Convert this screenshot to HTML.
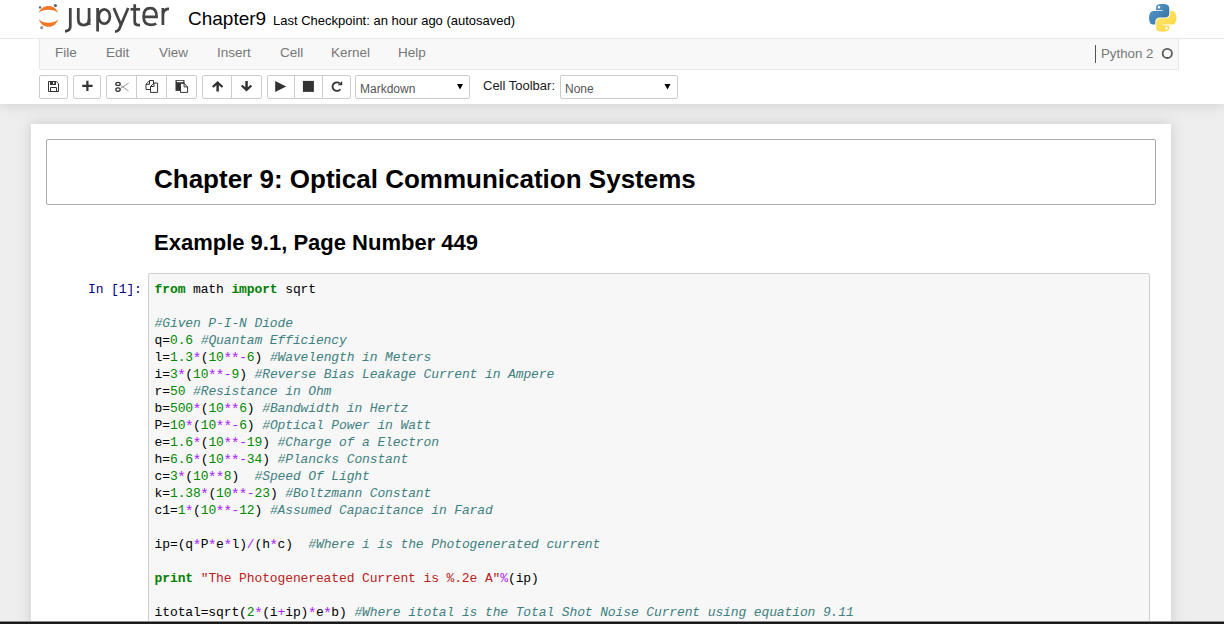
<!DOCTYPE html>
<html><head><meta charset="utf-8">
<style>
*{box-sizing:border-box;margin:0;padding:0}
html,body{width:1224px;height:624px;overflow:hidden;background:#eee;font-family:"Liberation Sans",sans-serif;font-size:13px;color:#000;position:relative}
#header{position:absolute;left:0;top:0;width:1224px;height:104px;background:#fff;box-shadow:0 0 12px 1px rgba(87,87,87,0.2);z-index:2}
#hdrline{position:absolute;left:0;top:38px;width:1224px;height:1px;background:#e7e7e7}
#logo{position:absolute;left:38px;top:2px}
#nbname{position:absolute;left:188px;top:8px;font-size:19px;line-height:22px}
#ckpt{position:absolute;left:273px;top:13px;font-size:13px;line-height:16px}
#pylogo{position:absolute;left:1149px;top:4px}
#menubar{position:absolute;left:39px;top:38px;width:1140px;height:32px;background:#f8f8f8;border:1px solid #e7e7e7;border-top-color:#e7e7e7;border-radius:0 0 1px 1px}
.mi{position:absolute;top:6px;font-size:13.5px;line-height:16px;color:#777}
#kdiv{position:absolute;left:1055px;top:6px;width:1px;height:18px;background:#555}
#kcirc{position:absolute;left:1122px;top:10px;width:11px;height:11px;border:2px solid #666;border-radius:50%}
.btn{position:absolute;top:75px;height:24px;border:1px solid #ccc;background:#fff;border-radius:2px}
.btn svg{position:absolute;left:50%;top:50%;transform:translate(-50%,-50%)}
.sel{position:absolute;top:75px;height:24px;border:1px solid #ccc;border-radius:2px;background:#fff;font-size:12px;color:#555;padding:5px 4px;line-height:16px}
.sel .ar{position:absolute;right:7px;top:4px;font-size:10px;color:#000}
#ctlabel{position:absolute;left:483px;top:78.2px;font-size:13px;line-height:16px;color:#1a1a1a}
#container{position:absolute;left:31px;top:124px;width:1140px;height:520px;background:#fff;box-shadow:0 0 12px 1px rgba(87,87,87,0.2)}
#cell1{position:absolute;left:46px;top:139px;width:1110px;height:66px;border:1px solid #ababab;border-radius:2px}
h1{position:absolute;left:154px;top:164px;font-size:26px;line-height:30px;font-weight:bold}
h2{position:absolute;left:154px;top:230px;font-size:22px;line-height:26px;font-weight:bold}
#prompt{position:absolute;left:88px;top:281px;font-family:"Liberation Mono",monospace;font-size:13px;letter-spacing:-0.12px;line-height:17px;color:#000080}
#input{position:absolute;left:148px;top:273px;width:1002px;height:400px;background:#f7f7f7;border:1px solid #cfcfcf;border-radius:2px}
#code{position:absolute;left:154.6px;top:281px;font-family:"Liberation Mono",monospace;font-size:13px;letter-spacing:-0.12px;line-height:17px;white-space:pre;color:#000}
.k{color:#008000;font-weight:bold}
.n{color:#008800}
.o{color:#aa22ff}
.st{font-style:normal;font-size:15px;letter-spacing:-1.32px;position:relative;left:-0.6px;top:1.8px}
.c{color:#408080;font-style:italic}
.s{color:#ba2121}
#bottombar{position:absolute;left:0;top:621px;width:1224px;height:3px;background:linear-gradient(#8c8c8c 0,#8c8c8c 1px,#141414 1px,#141414 2px,#1e1e1e 2px);z-index:5}
</style></head><body>
<div id="container"></div>
<div id="cell1"></div>
<h1>Chapter 9: Optical Communication Systems</h1>
<h2>Example 9.1, Page Number 449</h2>
<div id="prompt">In [1]:</div>
<div id="input"></div>
<div id="code"><span class="k">from</span> math <span class="k">import</span> sqrt

<span class="c">#Given P-I-N Diode</span>
q=<span class="n">0.6</span> <span class="c">#Quantam Efficiency</span>
l=<span class="n">1.3</span><span class="o"><i class="st">*</i></span>(<span class="n">10</span><span class="o"><i class="st">*</i><i class="st">*</i>-</span><span class="n">6</span>) <span class="c">#Wavelength in Meters</span>
i=<span class="n">3</span><span class="o"><i class="st">*</i></span>(<span class="n">10</span><span class="o"><i class="st">*</i><i class="st">*</i>-</span><span class="n">9</span>) <span class="c">#Reverse Bias Leakage Current in Ampere</span>
r=<span class="n">50</span> <span class="c">#Resistance in Ohm</span>
b=<span class="n">500</span><span class="o"><i class="st">*</i></span>(<span class="n">10</span><span class="o"><i class="st">*</i><i class="st">*</i></span><span class="n">6</span>) <span class="c">#Bandwidth in Hertz</span>
P=<span class="n">10</span><span class="o"><i class="st">*</i></span>(<span class="n">10</span><span class="o"><i class="st">*</i><i class="st">*</i>-</span><span class="n">6</span>) <span class="c">#Optical Power in Watt</span>
e=<span class="n">1.6</span><span class="o"><i class="st">*</i></span>(<span class="n">10</span><span class="o"><i class="st">*</i><i class="st">*</i>-</span><span class="n">19</span>) <span class="c">#Charge of a Electron</span>
h=<span class="n">6.6</span><span class="o"><i class="st">*</i></span>(<span class="n">10</span><span class="o"><i class="st">*</i><i class="st">*</i>-</span><span class="n">34</span>) <span class="c">#Plancks Constant</span>
c=<span class="n">3</span><span class="o"><i class="st">*</i></span>(<span class="n">10</span><span class="o"><i class="st">*</i><i class="st">*</i></span><span class="n">8</span>)  <span class="c">#Speed Of Light</span>
k=<span class="n">1.38</span><span class="o"><i class="st">*</i></span>(<span class="n">10</span><span class="o"><i class="st">*</i><i class="st">*</i>-</span><span class="n">23</span>) <span class="c">#Boltzmann Constant</span>
c1=<span class="n">1</span><span class="o"><i class="st">*</i></span>(<span class="n">10</span><span class="o"><i class="st">*</i><i class="st">*</i>-</span><span class="n">12</span>) <span class="c">#Assumed Capacitance in Farad</span>

ip=(q<span class="o"><i class="st">*</i></span>P<span class="o"><i class="st">*</i></span>e<span class="o"><i class="st">*</i></span>l)<span class="o">/</span>(h<span class="o"><i class="st">*</i></span>c)  <span class="c">#Where i is the Photogenerated current</span>

<span class="k">print</span> <span class="s">"The Photogenereated Current is %.2e A"</span><span class="o">%</span>(ip)

itotal=sqrt(<span class="n">2</span><span class="o"><i class="st">*</i></span>(i<span class="o">+</span>ip)<span class="o"><i class="st">*</i></span>e<span class="o"><i class="st">*</i></span>b) <span class="c">#Where itotal is the Total Shot Noise Current using equation 9.11</span></div>

<div id="header">
  <div id="hdrline"></div>
  <div id="nbname">Chapter9</div>
  <div id="ckpt">Last Checkpoint: an hour ago (autosaved)</div>
  <div id="menubar">
    <div class="mi" style="left:15px">File</div>
    <div class="mi" style="left:66px">Edit</div>
    <div class="mi" style="left:119px">View</div>
    <div class="mi" style="left:177px">Insert</div>
    <div class="mi" style="left:240px">Cell</div>
    <div class="mi" style="left:291px">Kernel</div>
    <div class="mi" style="left:358px">Help</div>
    <div id="kdiv"></div>
    <div class="mi" style="left:1061px;top:7px;font-size:13.3px">Python 2</div>
  </div>
  <div class="btn" style="left:39px;width:29px"></div>
  <div class="btn" style="left:73px;width:28px"></div>
  <div class="btn" style="left:106px;width:31px;border-radius:2px 0 0 2px"></div>
  <div class="btn" style="left:136px;width:31px;border-radius:0"></div>
  <div class="btn" style="left:166px;width:31px;border-radius:0 2px 2px 0"></div>
  <div class="btn" style="left:202px;width:30px;border-radius:2px 0 0 2px"></div>
  <div class="btn" style="left:231px;width:31px;border-radius:0 2px 2px 0"></div>
  <div class="btn" style="left:267px;width:28px;border-radius:2px 0 0 2px"></div>
  <div class="btn" style="left:294px;width:29px;border-radius:0"></div>
  <div class="btn" style="left:322px;width:29px;border-radius:0 2px 2px 0"></div>
  <div class="sel" style="left:355px;width:115px">Markdown</div>
  <div id="ctlabel">Cell Toolbar:</div>
  <div class="sel" style="left:560px;width:118px">None</div>
  <svg id="ov" width="1224" height="104" viewBox="0 0 1224 104" style="position:absolute;left:0;top:0">
    <!-- jupyter logo -->
    <path d="M38.9,12.8 C41.5,3.6 55.5,3.6 58.1,12.8 C54.5,8.67 42.5,8.67 38.9,12.8 Z" fill="#f37726"/>
    <path d="M38.9,19.2 C41.5,29.2 55.5,29.2 58.1,19.2 C54.5,24.0 42.5,24.0 38.9,19.2 Z" fill="#f37726"/>
    <circle cx="40.05" cy="7.4" r="1.2" fill="#616262"/>
    <circle cx="55.4" cy="5.5" r="1.6" fill="#616262"/>
    <circle cx="41.7" cy="27.7" r="1.6" fill="#989798"/>
    <g fill="none" stroke="#444" stroke-width="2.75">
      <path d="M70.3,8 V26.5 Q70.3,30.8 65,31.3"/>
      <path d="M78.3,8 V19.5 Q78.3,25 83.7,25 Q89.1,25 89.1,19"/>
      <path d="M89.1,8 V25"/>
      <path d="M97.6,8 V31.5"/>
      <ellipse cx="104.3" cy="16.5" rx="5.6" ry="7.2"/>
      <path d="M113.8,8 L121,25"/>
      <path d="M128.2,8 L119,29.5 Q117.8,31.5 115,31.5"/>
      <path d="M134.7,4.2 V21.5 Q134.7,25 138,25 H140"/>
      <path d="M130.5,9.3 H140"/>
      <path d="M144,16.8 H156.6 Q156.6,8.2 150.3,8.2 Q143.6,8.2 143.6,16.6 Q143.6,24.9 150.8,24.9 Q154,24.9 156.3,23.6"/>
      <path d="M162.9,8 V25"/>
      <path d="M162.9,13.5 Q164.5,8.7 169,8.9"/>
    </g>
    <!-- python logo -->
    <defs>
      <linearGradient id="pyb" x1="0" y1="0" x2="1" y2="1"><stop offset="0" stop-color="#5a9fd4"/><stop offset="1" stop-color="#306998"/></linearGradient>
      <linearGradient id="pyy" x1="0" y1="0" x2="1" y2="1"><stop offset="0" stop-color="#ffe873"/><stop offset="1" stop-color="#ffd43b"/></linearGradient>
    </defs>
    <g transform="translate(1149,4) scale(0.247)">
      <path fill="url(#pyb)" d="M54.9,0.0 C50.3,0.0 45.9,0.4 42.1,1.1 C30.8,3.1 28.7,7.3 28.7,15.0 V25.2 H55.4 V28.6 H18.7 C10.9,28.6 4.1,33.3 1.9,42.2 C-0.6,52.5 -0.7,58.9 1.9,69.6 C3.8,77.6 8.4,83.2 16.1,83.2 H25.4 V70.9 C25.4,62.0 33.1,54.2 42.1,54.2 H68.7 C76.1,54.2 82.0,48.1 82.0,40.7 V15.0 C82.0,7.7 75.9,2.3 68.7,1.1 C64.0,0.3 59.2,0.0 54.9,0.0 Z M40.4,8.3 C43.2,8.3 45.4,10.6 45.4,13.3 C45.4,16.1 43.2,18.3 40.4,18.3 C37.7,18.3 35.5,16.1 35.5,13.3 C35.5,10.6 37.7,8.3 40.4,8.3 Z"/>
      <path fill="url(#pyy)" d="M85.6,28.6 V40.6 C85.6,49.8 77.8,57.6 68.7,57.6 H42.1 C34.8,57.6 28.7,63.9 28.7,71.2 V96.8 C28.7,104.1 35.0,108.4 42.1,110.5 C50.6,113.0 58.7,113.4 68.7,110.5 C75.4,108.5 82.0,104.6 82.0,96.8 V86.6 H55.4 V83.2 H95.4 C103.2,83.2 106.1,77.7 108.8,69.6 C111.6,61.3 111.5,53.3 108.8,42.2 C106.9,34.3 103.1,28.6 95.4,28.6 Z M70.6,93.5 C73.4,93.5 75.6,95.8 75.6,98.5 C75.6,101.3 73.4,103.5 70.6,103.5 C67.9,103.5 65.6,101.3 65.6,98.5 C65.6,95.8 67.9,93.5 70.6,93.5 Z"/>
    </g>
    <!-- kernel circle -->
    <circle cx="1167.3" cy="53.4" r="4.6" fill="none" stroke="#5a5a5a" stroke-width="1.8"/>
    <!-- save -->
    <g fill="none" stroke="#333" stroke-width="1">
      <path d="M48.5,81.5 H56.3 L58.5,83.7 V91.5 H48.5 Z"/>
      <path d="M50.5,91.5 V87.5 H56.5 V91.5"/>
    </g>
    <path d="M50,81 H56 V85 H50 Z M53,82 V84 H54.3 V82 Z" fill="#333" fill-rule="evenodd"/>
    <!-- plus -->
    <path d="M86.3,80.8 H88.5 V84.8 H92.6 V87 H88.5 V91 H86.3 V87 H82.2 V84.8 H86.3 Z" fill="#333"/>
    <!-- scissors -->
    <g fill="none" stroke="#333" stroke-width="1.3">
      <ellipse cx="118" cy="83.9" rx="2.2" ry="1.55"/>
      <ellipse cx="118" cy="89.6" rx="2.2" ry="1.7"/>
    </g>
    <path d="M120.6,85.3 L128.5,90.8 M120.6,88.3 L128.7,83.1" fill="none" stroke="#8a8a8a" stroke-width="0.9"/>
    <!-- copy -->
    <path d="M146,89.5 V84.3 L149.7,80.5 H153.5 V83.2 M146,84.3 H149.5 V80.5 M146,89.5 H150.5" fill="none" stroke="#333" stroke-width="1"/>
    <path d="M150.5,86.5 L154,83 H157.6 V92.4 H150.5 Z" fill="#fff" stroke="#333" stroke-width="1"/>
    <path d="M150.5,86.5 H154 V83" fill="none" stroke="#333" stroke-width="1"/>
    <!-- paste -->
    <rect x="175.5" y="80.1" width="9" height="10.8" fill="#333"/>
    <rect x="176.8" y="80.9" width="6.5" height="1.3" fill="#fff"/>
    <path d="M180.5,83.3 H184.1 L187.6,86.9 V92.4 H180.5 Z" fill="#fff" stroke="#333" stroke-width="1"/>
    <path d="M184.1,83.3 V86.9 H187.6" fill="none" stroke="#333" stroke-width="1"/>
    <!-- up -->
    <path d="M217.6,80.9 L223.3,86.2 L221.7,87.8 L218.9,85.2 V91.6 H216.4 V85.2 L213.6,87.8 L212,86.2 Z" fill="#333"/>
    <!-- down -->
    <path d="M246.5,91.6 L252.2,86.3 L250.6,84.7 L247.8,87.3 V80.9 H245.3 V87.3 L242.5,84.7 L240.9,86.3 Z" fill="#333"/>
    <!-- play -->
    <path d="M275.2,80.9 L286.2,86.4 L275.2,91.9 Z" fill="#333"/>
    <!-- stop -->
    <rect x="302.9" y="80.9" width="11" height="11" fill="#333"/>
    <!-- refresh -->
    <path d="M339.6,83.3 A4.3,4.3 0 1 0 340.3,89.2" fill="none" stroke="#333" stroke-width="1.8"/>
    <path d="M342.2,80.9 V85.3 H337.8 Z" fill="#333"/>
    <!-- select arrows -->
    <path d="M457,84 H463 L460,89.6 Z" fill="#000"/>
    <path d="M664.5,84 H670.5 L667.5,89.6 Z" fill="#000"/>
  </svg>
</div>
<div id="bottombar"></div>
</body></html>
